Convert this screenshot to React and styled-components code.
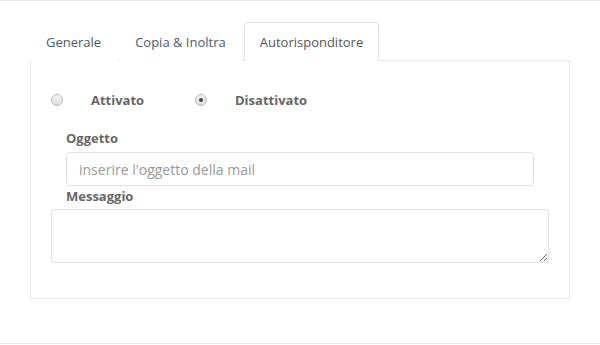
import React from 'react';
import styled, { createGlobalStyle } from 'styled-components';

const Global = createGlobalStyle`
  html, body { margin: 0; padding: 0; background: #fff; }
  body { font-family: "Open Sans", "Liberation Sans", sans-serif; }
`;

const Page = styled.div`
  box-sizing: border-box;
  height: 344px;
  border-top: 1px solid #e6e6e6;
  border-bottom: 1px solid #e6e6e6;
  padding: 21px 30px 0 30px;
`;

const Tabs = styled.ul`
  display: flex;
  margin: 0;
  padding: 0;
  list-style: none;
  position: relative;
  z-index: 1;
`;

const Tab = styled.li`
  box-sizing: border-box;
  height: 39px;
  margin-right: 2px;
  margin-bottom: -1px;
  padding: 1px 15px 0 15px;
  display: flex;
  align-items: center;
  font-size: 13px;
  color: ${p => (p.active ? '#555' : '#4b5a69')};
  background: #fff;
  border: 1px solid ${p => (p.active ? '#e3e3e3' : 'transparent')};
  border-bottom-color: ${p => (p.active ? '#fff' : 'transparent')};
  border-radius: 4px 4px 0 0;
  cursor: pointer;
`;

const Panel = styled.div`
  box-sizing: border-box;
  height: 239px;
  border: 1px solid #e6e6e6;
  padding: 29px 20px 0 20px;
`;

const RadioRow = styled.div`
  display: flex;
  align-items: center;
  height: 20px;
`;

const Option = styled.label`
  display: flex;
  align-items: center;
  width: ${p => p.width || 'auto'};
  font-size: 13px;
  font-weight: 700;
  color: #666;
`;

const Radio = styled.span`
  box-sizing: border-box;
  width: 12px;
  height: 12px;
  margin-right: 28px;
  border-radius: 50%;
  border: 1px solid #b9b9b9;
  background: linear-gradient(#f4f4f4, #dcdcdc);
  display: flex;
  align-items: center;
  justify-content: center;
  &::after {
    content: '';
    width: 4px;
    height: 4px;
    border-radius: 50%;
    background: ${p => (p.checked ? '#444' : 'transparent')};
  }
`;

const Field = styled.div`
  padding-left: ${p => p.indent || 0}px;
  padding-right: ${p => p.indent || 0}px;
`;

const Label = styled.div`
  font-size: 13px;
  font-weight: 700;
  color: #666;
  line-height: 16px;
  padding-left: ${p => p.indent || 0}px;
  margin-top: ${p => p.top || 0}px;
  margin-bottom: ${p => p.bottom || 5}px;
`;

const Input = styled.input`
  box-sizing: border-box;
  display: block;
  width: 100%;
  height: 34px;
  border: 1px solid #e2e2e2;
  border-radius: 4px;
  padding: 0 12px;
  font-family: "Open Sans", "Liberation Sans", sans-serif;
  font-size: 14px;
  color: #555;
  outline: none;
  &::placeholder { color: #999; }
`;

const TextArea = styled.textarea`
  box-sizing: border-box;
  display: block;
  width: 100%;
  height: 54px;
  border: 1px solid #e2e2e2;
  border-radius: 4px;
  padding: 6px 12px;
  font-family: "Open Sans", "Liberation Sans", sans-serif;
  font-size: 14px;
  outline: none;
  resize: vertical;
`;

export default function App() {
  return (
    <Page>
      <Global />
      <Tabs>
        <Tab>Generale</Tab>
        <Tab>Copia &amp; Inoltra</Tab>
        <Tab active>Autorisponditore</Tab>
      </Tabs>
      <Panel>
        <RadioRow>
          <Option width="144px"><Radio />Attivato</Option>
          <Option><Radio checked />Disattivato</Option>
        </RadioRow>
        <Label indent={15} top={20} bottom={6}>Oggetto</Label>
        <Field indent={15}>
          <Input placeholder="inserire l'oggetto della mail" />
        </Field>
        <Label indent={15} top={2}>Messaggio</Label>
        <Field>
          <TextArea />
        </Field>
      </Panel>
    </Page>
  );
}
